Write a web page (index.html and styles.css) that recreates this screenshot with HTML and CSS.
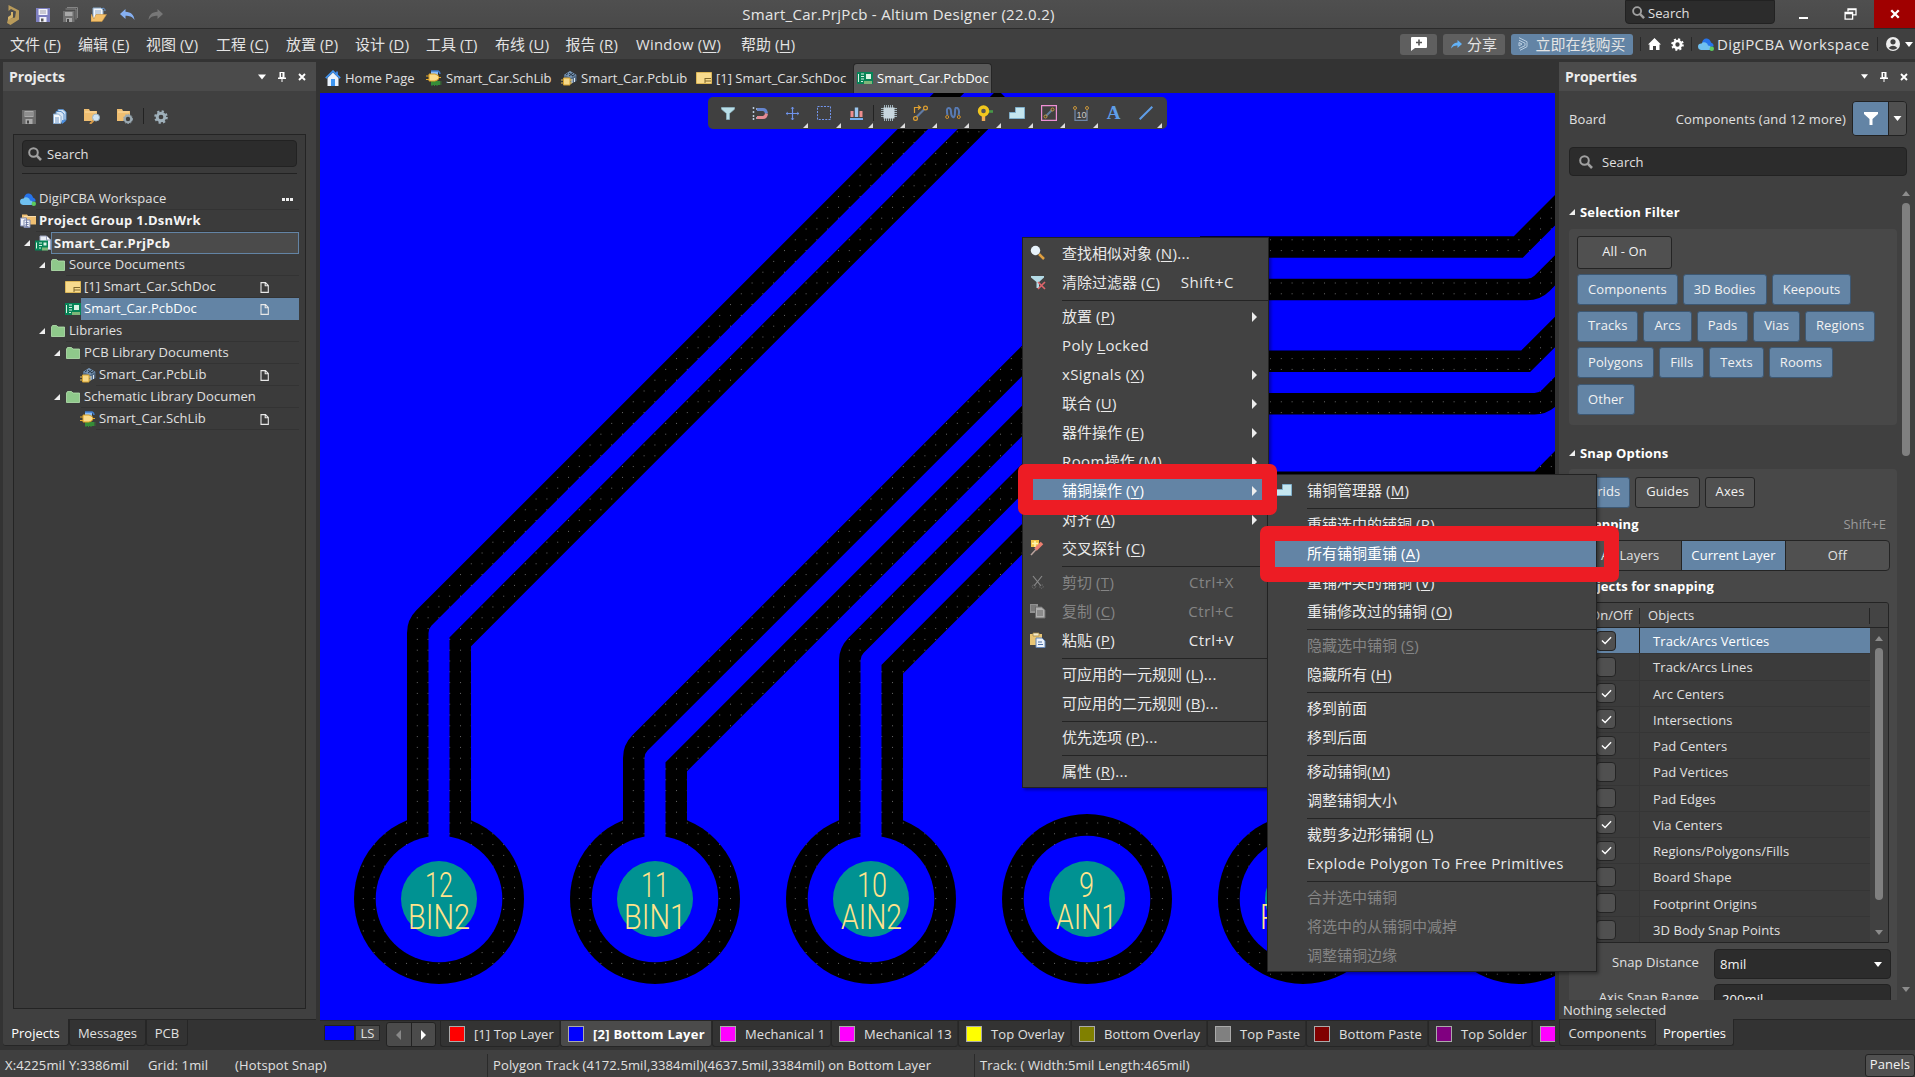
FILE: index.html
```html
<!DOCTYPE html>
<html lang="zh-CN">
<head>
<meta charset="utf-8">
<title>Smart_Car.PrjPcb - Altium Designer (22.0.2)</title>
<link rel="stylesheet" href="styles.css">
</head>
<body>
<svg class="defs" width="0" height="0">
  <symbol id="save" viewBox="0 0 14 14"><path d="M0 0h14v14H0z" fill="#7d7fc0"/><path d="M2.5 1h9v6h-9zM3.5 9h7v5h-7z" fill="#f2f2fa"/><path d="M4 3h6M4 5h6" stroke="#8a8a98" stroke-width=".8"/><path d="M5 10.500h2.500v3H5z" fill="#555"/></symbol>
  <symbol id="save-off" viewBox="0 0 14 14"><path d="M0 0h14v14H0z" fill="#6c6c6c"/><path d="M2.500 1h9v6h-9zM3.500 9h7v5h-7z" fill="#aaa"/><path d="M3 3h8M3 5h8" stroke="#666" stroke-width=".8"/><path d="M5 10.500h2v3H5z" fill="#444"/></symbol>
  <symbol id="saveall" viewBox="0 0 15 15"><path d="M4 .5h10.500V11M2.500 2h10.500v10.500" fill="none" stroke="#858585"/><path d="M0 4h11.500v11H0z" fill="#707070"/><path d="M2 5h7.500v4H2zM3 11h6v4H3z" fill="#a8a8a8"/><path d="M4 12h2v3H4z" fill="#444"/></symbol>
  <symbol id="open" viewBox="0 0 16 15"><path d="M2 1h8l2 2v9H2z" fill="#f4f7fb" stroke="#87a8c9"/><path d="M4 4h6M4 6h6M4 8h6" stroke="#7898b9" stroke-width=".8"/><path d="M0 7v7.500h11l4.500-7H5L3 12z" fill="#f3bf69" stroke="#c99544" stroke-width=".6"/><path d="M11 1.500q3-1 3 2.500" stroke="#6d9ddb" fill="none"/></symbol>
  <symbol id="undo" viewBox="0 0 15 12"><path d="M5.500 0v2.800C11 3 14 6 14.500 11 12 7.500 9.500 6.800 5.500 6.800V10L0 5z" fill="#86b0f2"/></symbol>
  <symbol id="redo" viewBox="0 0 15 12"><path d="M9.500 0v2.800C4 3 1 6 .5 11 3 7.500 5.500 6.800 9.500 6.800V10L15 5z" fill="#777"/></symbol>
  <symbol id="mag" viewBox="0 0 14 14"><circle cx="5.500" cy="5.500" r="4.300" fill="none" stroke="#a0a0a0" stroke-width="2"/><path d="M8.700 8.700l4.300 4.300" stroke="#a0a0a0" stroke-width="2.600"/></symbol>
  <symbol id="home" viewBox="0 0 16 16"><path d="M11 1.500h2V6h-2z" fill="#3a7ed8"/><path d="M2.500 8v8h11V8L8 2.500z" fill="#eaf2fb"/><path d="M.8 8.200L8 1.200l7.200 7" fill="none" stroke="#3f92ee" stroke-width="1.800"/><path d="M6 9h4v7H6z" fill="#3d96f2"/></symbol>
  <symbol id="schlib" viewBox="0 0 16 16"><path d="M5 1h7v4H5z" fill="#8cbcf5"/><path d="M5 1h7q2 1 2 3" fill="none" stroke="#3e7ccc" stroke-width="1.500"/><path d="M5 11h9v4H5z" fill="#368c38"/><path d="M6 15v1M8.500 15v1M11 15v1M14 12h1.500M14 14h1.500" stroke="#368c38"/><path d="M0 6h4M0 9.500h4M12 7.500h3" stroke="#e3a728"/><path d="M3 4h6q4 1 4 3.500T9 11H3z" fill="#fbdc8c" stroke="#d99e22"/></symbol>
  <symbol id="pcblib" viewBox="0 0 16 16"><path d="M3 5l6-4 6.500 4v6L10 14 3 9z" fill="#526b86"/><path d="M3 5l6-4 6.500 4L10 8z" fill="#7794b3"/><path d="M5 5l2-1.500M8 6l4-3M11 6l3-1.500M8 3l4 3" stroke="#283848"/><path d="M11 9v4M13.500 8v4" stroke="#dce5ef"/><path d="M2.500 8h6.500v7H2.500z" fill="#f7d987" stroke="#d6a330"/><path d="M0 10h2M0 13h2M9 10h2M9 13h2" stroke="#e8bd54"/></symbol>
  <symbol id="schdoc" viewBox="0 0 16 12"><path d="M.5.5h15v11H.5z" fill="#f8db8d" stroke="#ddb758"/><path d="M9 6.500h6M9 9h6M9 6v5" stroke="#80682c"/></symbol>
  <symbol id="pcbdoc" viewBox="0 0 16 12"><path d="M0 0h16v12H0z" fill="#078457"/><path d="M1.500 2v8M4 2h3M4 4.500h3M4 7h3M4 9.500h2" stroke="#d8f3e4"/><path d="M9 2h5v5H9z" fill="#d7f3e2"/><path d="M8 9v3M10 9v3M12 9v3M14 9v3" stroke="#f3e89b"/></symbol>
  <symbol id="prjpcb" viewBox="0 0 16 15"><path d="M5 .5h6.500l4 4V14H5z" fill="#e9edf5" stroke="#9ba2bd"/><path d="M11.500.5v4h4" fill="#fff" stroke="#9ba2bd"/><path d="M0 5h13v10H0z" fill="#078457"/><path d="M1.500 7v6M4 7.500h3M4 10h3M4 12.500h2" stroke="#d8f3e4"/><path d="M8.500 7h3v3h-3z" fill="#d7f3e2"/><path d="M8 12v3M10 12v3M12 12v3" stroke="#f3e89b"/></symbol>
  <symbol id="folder" viewBox="0 0 14 12"><path d="M.5 2l1-1.500h4L7 2h6.500v9.500H.5z" fill="#8fc98b" stroke="#b6e3b0" stroke-width=".8"/></symbol>
  <symbol id="group" viewBox="0 0 16 15"><path d="M2 1h5l1.500 2H16v8H2z" fill="#efbf72"/><path d="M4 3h12" stroke="#fadca9"/><path d="M.5 4.500h6v8h-6zM4 6.500h6V14H4z" fill="#eef1f8" stroke="#7e88ad"/><path d="M5.500 9h3M5.500 11h3M5.500 13h3" stroke="#5d6b9a" stroke-width=".8"/></symbol>
  <symbol id="cloud" viewBox="0 0 16 13"><path d="M4 5Q5 0 9 .5q3 .5 4 4 3 1 2.500 4L10 9z" fill="#2673ea"/><path d="M3 12Q0 11.500 0 8.500T3.500 5.500Q5 3.500 7.500 4.500T10 7.500q3 0 3 2.500T10.500 12z" fill="#6fc0f0"/><circle cx="13.800" cy="10.800" r="2.200" fill="#5ccb5f"/></symbol>
  <symbol id="doc" viewBox="0 0 9 11"><path d="M1 .6h4.500L8.300 3.500v6.900H1z M5.200.6v3.200h3" fill="none" stroke="#e8e8e8" stroke-width="1.100"/></symbol>
  <symbol id="tri" viewBox="0 0 6 6"><path d="M6 0v6H0z" fill="#eee"/></symbol>
  <symbol id="pin" viewBox="0 0 8 10"><path d="M1.500 0h5v5.500h-5zM0 5.500h8V7H0zM3.500 7h1v3h-1z" fill="#fff"/><path d="M3 1h1.500v4H3z" fill="#555"/></symbol>
  <symbol id="x" viewBox="0 0 8 8"><path d="M1 1l6 6M7 1L1 7" stroke="#fff" stroke-width="1.900"/></symbol>
  <symbol id="down" viewBox="0 0 8 5"><path d="M0 0h8L4 5z" fill="#fff"/></symbol>
  <symbol id="up" viewBox="0 0 8 5"><path d="M0 5h8L4 0z" fill="#8c8c8c"/></symbol>
  <symbol id="downg" viewBox="0 0 8 5"><path d="M0 0h8L4 5z" fill="#8c8c8c"/></symbol>
  <symbol id="gear" viewBox="0 0 14 14"><circle cx="7" cy="7" r="5.700" fill="none" stroke="currentColor" stroke-width="2.200" stroke-dasharray="2.200 2.270"/><circle cx="7" cy="7" r="3.800" fill="none" stroke="currentColor" stroke-width="2.900"/></symbol>
  <symbol id="copies" viewBox="0 0 14 15"><path d="M5 .5h5L13 3v8H5z" fill="#cfe0f2" stroke="#5b8fc8"/><path d="M3 2.500h5L11 5v8H3z" fill="#d8e6f5" stroke="#5b8fc8"/><path d="M.5 5h5L8 7.500v7H.5z" fill="#f5f9fd" stroke="#88abd0"/><path d="M2 9h4M2 11h4M2 13h4" stroke="#4a7db8" stroke-width=".8"/><path d="M9 11v4l4.500-3.500z" fill="#4b8fe0"/></symbol>
  <symbol id="fmag" viewBox="0 0 16 15"><path d="M0 0h5l1 2h7v10H0z" fill="#efbe71"/><path d="M1 3h11" stroke="#fbdca4"/><path d="M6 15l4-4" stroke="#d79a48" stroke-width="2"/><circle cx="12" cy="8.500" r="3.500" fill="#cfe3f2" stroke="#9bb5c7"/></symbol>
  <symbol id="fgear" viewBox="0 0 16 15"><path d="M0 0h5l1 2h7v10H0z" fill="#efbe71"/><path d="M1 3h11" stroke="#fbdca4"/><circle cx="11" cy="10" r="3.300" fill="#404040" stroke="#9aa9b2" stroke-width="2.200"/><circle cx="11" cy="10" r="4.600" fill="none" stroke="#9aa9b2" stroke-dasharray="1.500 1.500"/></symbol>
  <symbol id="funnel" viewBox="0 0 14 13"><path d="M0 0h14v2L8.500 7v6h-3V7L0 2z" fill="#fff"/></symbol>
  <symbol id="funnelb" viewBox="0 0 14 13"><path d="M.5.5h13v1.700L8.500 6.500v6h-3v-6L.5 2.200z" fill="#b9dfe8" stroke="#8fb8c6" stroke-width=".7"/></symbol>
  <symbol id="poly" viewBox="0 0 16 12"><path d="M.5 11.500v-6h6v-5h9v11z" fill="#c5e6ef" stroke="#80b0cc"/></symbol>
  <symbol id="check" viewBox="0 0 12 9"><path d="M1 4.500l3.500 3.300L11 1" fill="none" stroke="#fff" stroke-width="1.500"/></symbol>
</svg>

<div class="app">
  <header class="titlebar">
    <div class="quick">
      <svg class="q-logo" viewBox="0 0 13 20"><path d="M1.500 0L12 5.500v9L3.500 20 0 18l1-4 7-1.500 1-6L4 4l-2.500 2z" fill="#b89a5a"/><path d="M4 7v3L1 12v3l5-2.500V7z" fill="#d3b36b"/></svg>
      <svg class="q1"><use href="#save"/></svg><svg class="q2"><use href="#saveall"/></svg><svg class="q3"><use href="#open"/></svg><svg class="q4"><use href="#undo"/></svg><svg class="q5"><use href="#redo"/></svg>
    </div>
    <div class="title">Smart_Car.PrjPcb - Altium Designer (22.0.2)</div>
    <div class="winctl">
      <div class="tsearch"><svg width="13" height="13"><use href="#mag"/></svg><span>Search</span></div>
      <i class="min"></i>
      <svg class="restore" viewBox="0 0 12 12"><path d="M3.500 3.500V.8h8v6H8M3 1.500h9" fill="none" stroke="#fff" stroke-width="1.300"/><path d="M.6 4.500h7.500v6.700H.6zM.5 5.500h8" fill="none" stroke="#fff" stroke-width="1.300"/></svg>
      <div class="close"><svg width="10" height="10"><use href="#x"/></svg></div>
    </div>
  </header>

  <nav class="menubar">
    <div class="menus">
      <span>文件 <b>(<u>F</u>)</b></span><span>编辑 <b>(<u>E</u>)</b></span><span>视图 <b>(<u>V</u>)</b></span><span>工程 <b>(<u>C</u>)</b></span><span>放置 <b>(<u>P</u>)</b></span><span>设计 <b>(<u>D</u>)</b></span><span>工具 <b>(<u>T</u>)</b></span><span>布线 <b>(<u>U</u>)</b></span><span>报告 <b>(<u>R</u>)</b></span><span><b>Window (<u>W</u>)</b></span><span>帮助 <b>(<u>H</u>)</b></span>
    </div>
    <div class="account">
      <div class="abtn a1"><svg width="16" height="14" viewBox="0 0 16 14"><path d="M0 1q0-1 1-1h14q1 0 1 1v9q0 1-1 1H4l-4 3z" fill="#fff"/><path d="M8 2.500v6M5 5.500h6" stroke="#555" stroke-width="1.600"/></svg></div>
      <div class="abtn a2"><svg width="11" height="9" viewBox="0 0 11 9"><path d="M6.500 0L11 4 6.500 8V5.500Q2.500 5 0 8.500 1 3 6.500 2.500z" fill="#62b1f6"/></svg><span>分享</span></div>
      <div class="abtn a3"><svg width="10" height="14" viewBox="0 0 10 14"><path d="M1 .7l8 4v5L2 13.300M1 3.200l6 3v2.500L1 11.500M1 5.500l3 1.500-3 2z" fill="none" stroke="#bcd0e2"/></svg><span>立即在线购买</span></div>
      <i class="vs"></i>
      <svg class="ah" viewBox="0 0 13 12"><path d="M6.500 0L13 6.500h-1.500V12H8V8H5v4H1.500V6.500H0z" fill="#fff"/></svg>
      <svg class="ag" viewBox="0 0 14 14"><use href="#gear"/></svg>
      <i class="vs"></i>
      <svg class="ac"><use href="#cloud"/></svg><span class="ws">DigiPCBA Workspace</span>
      <i class="vs"></i>
      <svg class="au" viewBox="0 0 14 14"><circle cx="7" cy="7" r="7" fill="#eee"/><circle cx="7" cy="4.800" r="2.600" fill="#404040"/><path d="M2.500 11Q7 6.500 11.500 11 7 14.500 2.500 11z" fill="#404040"/></svg>
      <svg class="ad" width="8" height="5"><use href="#down"/></svg>
    </div>
  </nav>

  <main class="work">
    <aside class="left">
      <div class="panel">
        <div class="phead"><h2>Projects</h2><div class="pctl"><svg width="8" height="6"><use href="#down"/></svg><svg width="8" height="10"><use href="#pin"/></svg><svg width="8" height="8"><use href="#x"/></svg></div></div>
        <div class="ptools"><svg width="14" height="14"><use href="#save-off"/></svg><svg width="14" height="15"><use href="#copies"/></svg><svg width="16" height="15"><use href="#fmag"/></svg><svg width="16" height="15"><use href="#fgear"/></svg><i></i><svg class="pg" width="14" height="14"><use href="#gear"/></svg></div>
        <div class="tree">
          <div class="tsearchbox"><svg width="14" height="14"><use href="#mag"/></svg>Search</div>
          <div class="rule"></div>
          <ul>
            <li class="l0 cl"><svg class="ic" viewBox="0 0 16 13"><use href="#cloud"/></svg><span>DigiPCBA Workspace</span><em><i></i><i></i><i></i></em></li>
            <li class="l0 bold"><svg class="ic"><use href="#group"/></svg><span>Project Group 1.DsnWrk</span></li>
            <li class="l1 bold box"><svg class="ar"><use href="#tri"/></svg><svg class="ic"><use href="#prjpcb"/></svg><span>Smart_Car.PrjPcb</span></li>
            <li class="l2"><svg class="ar"><use href="#tri"/></svg><svg class="fo"><use href="#folder"/></svg><span>Source Documents</span></li>
            <li class="l3"><svg class="dc"><use href="#schdoc"/></svg><span>[1] Smart_Car.SchDoc</span><svg class="pg2"><use href="#doc"/></svg></li>
            <li class="l3 sel"><svg class="dc"><use href="#pcbdoc"/></svg><span>Smart_Car.PcbDoc</span><svg class="pg2"><use href="#doc"/></svg></li>
            <li class="l2"><svg class="ar"><use href="#tri"/></svg><svg class="fo"><use href="#folder"/></svg><span>Libraries</span></li>
            <li class="l2b"><svg class="ar"><use href="#tri"/></svg><svg class="fo"><use href="#folder"/></svg><span>PCB Library Documents</span></li>
            <li class="l4"><svg class="ic"><use href="#pcblib"/></svg><span>Smart_Car.PcbLib</span><svg class="pg2"><use href="#doc"/></svg></li>
            <li class="l2b"><svg class="ar"><use href="#tri"/></svg><svg class="fo"><use href="#folder"/></svg><span>Schematic Library Documen</span></li>
            <li class="l4"><svg class="ic"><use href="#schlib"/></svg><span>Smart_Car.SchLib</span><svg class="pg2"><use href="#doc"/></svg></li>
          </ul>
        </div>
      </div>
      <div class="ptabs"><span class="on">Projects</span><span>Messages</span><span>PCB</span></div>
    </aside>

    <section class="center">
      <div class="dtabs">
        <span><svg class="ic"><use href="#home"/></svg>Home Page</span><span><svg class="ic"><use href="#schlib"/></svg>Smart_Car.SchLib</span><span><svg class="ic"><use href="#pcblib"/></svg>Smart_Car.PcbLib</span><span><svg class="dc"><use href="#schdoc"/></svg>[1] Smart_Car.SchDoc</span><span class="on"><svg class="dc"><use href="#pcbdoc"/></svg>Smart_Car.PcbDoc</span>
      </div>
      <svg class="board" viewBox="320 93 1235 927">
        <defs>
          <pattern id="grid" patternUnits="userSpaceOnUse" x="6.400" y="1.700" width="10.800" height="10.800"><path d="M0 0h10.800v10.800H0z" fill="#000"/><path d="M0 0h1v1H0z" fill="#6a6a6a"/></pattern>
          <g id="tracks" fill="none" stroke-linejoin="round">
            <path d="M439 899V633L990 82"/><path d="M655 899V758L1100 313"/><path d="M871 899V660.500L1150 381"/>
            <path d="M1200 268.300H1527L1600 195.300"/><path d="M1200 382.500H1534.500L1600 317"/><path d="M1200 503.500H1548L1600 451"/>
          </g>
          <g id="pads"><circle cx="439" cy="899"/><circle cx="655" cy="899"/><circle cx="871" cy="899"/><circle cx="1087" cy="899"/><circle cx="1303" cy="899"/><circle cx="1519" cy="899"/></g>
        </defs>
        <path d="M320 93h1235v927H320z" fill="#00f"/>
        <use href="#tracks" stroke="url(#grid)" stroke-width="64"/>
        <use href="#pads" class="p-out" fill="url(#grid)"/>
        <use href="#tracks" stroke="#00f" stroke-width="21"/>
        <use href="#pads" class="p-in" fill="#00f"/>
        <use href="#pads" class="p-hole" fill="#009292"/>
        <g class="net">
          <text x="425" y="897" textLength="28" lengthAdjust="spacingAndGlyphs">12</text><text x="408" y="929" textLength="62" lengthAdjust="spacingAndGlyphs">BIN2</text>
          <text x="641" y="897" textLength="28" lengthAdjust="spacingAndGlyphs">11</text><text x="624" y="929" textLength="62" lengthAdjust="spacingAndGlyphs">BIN1</text>
          <text x="857" y="897" textLength="30" lengthAdjust="spacingAndGlyphs">10</text><text x="841" y="929" textLength="61" lengthAdjust="spacingAndGlyphs">AIN2</text>
          <text x="1079" y="897" textLength="15" lengthAdjust="spacingAndGlyphs">9</text><text x="1056" y="929" textLength="61" lengthAdjust="spacingAndGlyphs">AIN1</text>
          <text x="1260" y="929" textLength="86" lengthAdjust="spacingAndGlyphs">PWMA</text>
        </g>
      </svg>
      <div class="ltabs">
        <div class="ls"><i></i><b>LS</b></div>
        <div class="lnav"><span><svg width="5" height="10" viewBox="0 0 5 10"><path d="M5 0v10L0 5z" fill="#888"/></svg></span><span><svg width="5" height="10" viewBox="0 0 5 10"><path d="M0 0v10l5-5z" fill="#fff"/></svg></span></div>
        <div class="lt red">[1] Top Layer</div><div class="lt blue on">[2] Bottom Layer</div><div class="lt mag">Mechanical 1</div><div class="lt mag">Mechanical 13</div><div class="lt yel">Top Overlay</div><div class="lt oli">Bottom Overlay</div><div class="lt gry">Top Paste</div><div class="lt mar">Bottom Paste</div><div class="lt pur">Top Solder</div><div class="lt mag"></div>
      </div>
    </section>

    <aside class="right">
      <div class="panel">
        <div class="phead"><h2>Properties</h2><div class="pctl"><svg width="7" height="5"><use href="#down"/></svg><svg width="8" height="10"><use href="#pin"/></svg><svg width="8" height="8"><use href="#x"/></svg></div></div>
        <div class="kind"><span>Board</span><span class="k2">Components (and 12 more)</span><div class="fbtn"><i><svg width="14" height="13"><use href="#funnel"/></svg></i><b><svg width="9" height="5"><use href="#down"/></svg></b></div></div>
        <div class="psearch"><svg width="14" height="14"><use href="#mag"/></svg>Search</div>
        <div class="scroller">
          <div class="sections">
            <h3 class="h-sel"><svg width="6" height="6"><use href="#tri"/></svg>Selection Filter</h3>
            <div class="card filt">
              <div><button class="g">All - On</button></div>
              <div><button>Components</button><button>3D Bodies</button><button>Keepouts</button></div>
              <div><button>Tracks</button><button>Arcs</button><button>Pads</button><button>Vias</button><button>Regions</button></div>
              <div><button>Polygons</button><button>Fills</button><button>Texts</button><button>Rooms</button></div>
              <div><button>Other</button></div>
            </div>
            <h3 class="h-snap"><svg width="6" height="6"><use href="#tri"/></svg>Snap Options</h3>
            <div class="card snap">
              <div class="modes"><button>Grids</button><button class="g">Guides</button><button class="g">Axes</button></div>
              <div class="srow"><strong>Snapping</strong><span>Shift+E</span></div>
              <div class="seg"><span>All Layers</span><span class="on">Current Layer</span><span>Off</span></div>
              <strong class="ofs">Objects for snapping</strong>
              <div class="tbl">
                <div class="th"><span>On/Off</span><span>Objects</span></div>
                <div class="tb">
                  <div class="rows">
                    <div class="r on"><i><svg><use href="#check"/></svg></i><span>Track/Arcs Vertices</span></div>
                    <div class="r"><i></i><span>Track/Arcs Lines</span></div>
                    <div class="r"><i><svg><use href="#check"/></svg></i><span>Arc Centers</span></div>
                    <div class="r"><i><svg><use href="#check"/></svg></i><span>Intersections</span></div>
                    <div class="r"><i><svg><use href="#check"/></svg></i><span>Pad Centers</span></div>
                    <div class="r"><i></i><span>Pad Vertices</span></div>
                    <div class="r"><i></i><span>Pad Edges</span></div>
                    <div class="r"><i><svg><use href="#check"/></svg></i><span>Via Centers</span></div>
                    <div class="r"><i><svg><use href="#check"/></svg></i><span>Regions/Polygons/Fills</span></div>
                    <div class="r"><i></i><span>Board Shape</span></div>
                    <div class="r"><i></i><span>Footprint Origins</span></div>
                    <div class="r"><i></i><span>3D Body Snap Points</span></div>
                  </div>
                  <div class="sb"><svg width="8" height="5"><use href="#up"/></svg><i></i><svg width="8" height="5"><use href="#downg"/></svg></div>
                </div>
              </div>
              <div class="fld"><label>Snap Distance</label><div>8mil<svg width="10" height="5"><use href="#down"/></svg></div></div>
              <div class="fld f2"><label>Axis Snap Range</label><div>200mil</div></div>
            </div>
          </div>
          <div class="sb big"><svg width="8" height="5"><use href="#up"/></svg><i></i><svg width="8" height="5"><use href="#downg"/></svg></div>
        </div>
        <div class="nosel">Nothing selected</div>
      </div>
      <div class="ptabs"><span>Components</span><span class="on">Properties</span></div>
    </aside>
  </main>

  <footer class="status">
    <span>X:4225mil Y:3386mil</span><span>Grid: 1mil</span><span>(Hotspot Snap)</span><span>Polygon Track (4172.5mil,3384mil)(4637.5mil,3384mil) on Bottom Layer</span><span>Track: ( Width:5mil Length:465mil)</span><button>Panels</button>
  </footer>
</div>

<div class="cbar">
  <span><svg width="14" height="13"><use href="#funnelb"/></svg></span>
  <span><svg width="16" height="13" viewBox="0 0 16 13"><path d="M1.500 0v2M1.500 4v2M1.500 8v2M1.500 11v2M4 2h1M4 11h1" stroke="#bcd" stroke-width="1.500"/><path d="M5 2.500h6q3 0 3.500 4" fill="none" stroke="#6585cf" stroke-width="3"/><path d="M5 10.500h6q3 0 3.500-4" fill="none" stroke="#e58a93" stroke-width="3"/></svg></span>
  <span class="c"><svg width="13" height="13" viewBox="0 0 13 13"><path d="M6.500 0v13M0 6.500h13" stroke="#6f93ea" stroke-width="1.200"/><path d="M5 2l1.500-2L8 2M5 11l1.500 2L8 11M2 5L0 6.500 2 8M11 5l2 1.500L11 8" fill="none" stroke="#6f93ea" stroke-width=".7"/></svg></span>
  <span class="c"><svg width="14" height="14" viewBox="0 0 14 14"><path d="M.5.500h13v13H.5z" fill="none" stroke="#7396ee" stroke-dasharray="2 1.250"/></svg></span>
  <span class="c"><svg width="13" height="13" viewBox="0 0 13 13"><path d="M.5 4h3v6h-3zM9.500 4h3v6h-3z" fill="#ee8e8e"/><path d="M4.800.5h3.400V10H4.800z" fill="#9cc6ee"/><path d="M0 12h13" stroke="#75aef0" stroke-width="2"/></svg></span>
  <i></i>
  <span class="c"><svg width="16" height="16" viewBox="0 0 16 16"><path d="M3.500 0v16M5.500 0v16M7.500 0v16M9.500 0v16M11.500 0v16M0 3.500h16M0 5.500h16M0 7.500h16M0 9.500h16M0 11.500h16" stroke="#9fb1ba"/><path d="M2.500 2.500h11v11h-11z" fill="#c8d6de"/></svg></span>
  <span class="c"><svg width="15" height="16" viewBox="0 0 15 16"><path d="M3.500 12L11 4.500" stroke="#607ba5" stroke-width="2.200"/><circle cx="2.500" cy="13.500" r="1.900" fill="none" stroke="#e0a030" stroke-width="1.200"/><circle cx="12.500" cy="3" r="1.900" fill="none" stroke="#e0a030" stroke-width="1.200"/><path d="M1.500 8V2.500H7M5 .5l2.500 2L5 4.500" fill="none" stroke="#e0a030" stroke-width="1.200"/></svg></span>
  <span class="c"><svg width="16" height="12" viewBox="0 0 16 12"><path d="M2.500 8Q1 1 3.500 1T6 5t2 5 2-5 2.500-4T13.500 8" fill="none" stroke="#587bb4" stroke-width="2"/><circle cx="2.200" cy="10" r="1.500" fill="none" stroke="#d0922c"/><circle cx="13.800" cy="10" r="1.500" fill="none" stroke="#d0922c"/></svg></span>
  <span class="c"><svg width="16" height="16" viewBox="0 0 16 16"><path d="M9 6.500h7" stroke="#479848" stroke-width="2.600"/><path d="M6.500 9v7" stroke="#f0ad55" stroke-width="3.400"/><circle cx="6.500" cy="6" r="4" fill="#555" stroke="#f2c71d" stroke-width="3.400"/></svg></span>
  <span class="c"><svg width="16" height="12"><use href="#poly"/></svg></span>
  <span class="c"><svg width="16" height="16" viewBox="0 0 16 16"><path d="M.6.600h14.800v14.800H.6z" fill="none" stroke="#ee8fd4" stroke-width="1.200"/><path d="M5 11l6-6" stroke="#6480a0" stroke-width="2"/><circle cx="4.500" cy="11.500" r="1.500" fill="none" stroke="#c8963c"/><circle cx="11.500" cy="4.500" r="1.500" fill="none" stroke="#c8963c"/></svg></span>
  <span class="c"><svg width="16" height="15" viewBox="0 0 16 15"><path d="M2 4v10.300h12V4" fill="none" stroke="#6d86a8" stroke-width="1.300"/><circle cx="2" cy="2" r="1.500" fill="none" stroke="#c8963c"/><circle cx="14" cy="2" r="1.500" fill="none" stroke="#c8963c"/><text x="3.500" y="11.500" font-size="9">10</text></svg></span>
  <span class="A">A</span>
  <span class="c"><svg width="14" height="14" viewBox="0 0 14 14"><path d="M.7 13.300L13.300.7" stroke="#5f9ee8" stroke-width="2"/></svg></span>
</div>

<div class="menu m1">
  <div class="mi"><svg class="mic" viewBox="0 0 16 16"><path d="M9 9l5 5" stroke="#e0a040" stroke-width="2.500"/><circle cx="5.500" cy="5.500" r="4.700" fill="#e8f3fb"/></svg>查找相似对象 <b>(<u>N</u>)...</b></div>
  <div class="mi"><svg class="mic" viewBox="0 0 16 16"><path d="M1 2h13v1.500L9 8v6H6.500V8L1 3.500z" fill="#b4dbe6"/><path d="M8 8l7 7M15 8l-7 7" stroke="#e0666c" stroke-width="1.600"/></svg>清除过滤器 <b>(<u>C</u>)</b><kbd>Shift+C</kbd></div>
  <hr>
  <div class="mi s">放置 <b>(<u>P</u>)</b></div>
  <div class="mi"><b>Poly <u>L</u>ocked</b></div>
  <div class="mi s"><b>xSignals (<u>X</u>)</b></div>
  <div class="mi s">联合 <b>(<u>U</u>)</b></div>
  <div class="mi s">器件操作 <b>(<u>E</u>)</b></div>
  <div class="mi s"><b>Room</b>操作 <b>(<u>M</u>)</b></div>
  <div class="mi s hot">铺铜操作 <b>(<u>Y</u>)</b></div>
  <div class="mi s">对齐 <b>(<u>A</u>)</b></div>
  <div class="mi"><svg class="mic" viewBox="0 0 16 16"><path d="M1 0h8v7H1z" fill="#f3c64a"/><path d="M2 3.500h6M5 1v6" stroke="#fff5b0" stroke-width="1.500"/><path d="M5.500 9.500L12 3" stroke="#ec7f70" stroke-width="3.600"/><path d="M1 15l5-5.500" stroke="#b9a29c" stroke-width="1.500"/></svg>交叉探针 <b>(<u>C</u>)</b></div>
  <hr>
  <div class="mi off"><svg class="mic" viewBox="0 0 16 16"><path d="M3 2l8 10M12 2L4 12" stroke="#8a8a8a" stroke-width="1.200"/><circle cx="4" cy="12.500" r="1.800" fill="none" stroke="#777" stroke-dasharray="1 1"/><circle cx="11.500" cy="12.500" r="1.800" fill="none" stroke="#777" stroke-dasharray="1 1"/></svg>剪切 <b>(<u>T</u>)</b><kbd>Ctrl+X</kbd></div>
  <div class="mi off"><svg class="mic" viewBox="0 0 16 16"><path d="M0 1h8v9H0z" fill="#909090"/><path d="M5.500 4h6l3.500 3v8H5.500z" fill="#b0b0b0" stroke="#6c6c6c"/><path d="M1 3h5M1 5h4M1 7h4M7 8h6M7 10h6M7 12h6" stroke="#666"/></svg>复制 <b>(<u>C</u>)</b><kbd>Ctrl+C</kbd></div>
  <div class="mi"><svg class="mic" viewBox="0 0 16 16"><path d="M0 2h12v11H0z" fill="#e9c574"/><path d="M3 1h6v3H3z" fill="#f6edcf" stroke="#a78b48" stroke-width=".8"/><path d="M6 6h6l3 3v6.500H6z" fill="#eaf1fa" stroke="#6385b5"/><path d="M8 10h4M8 12.500h5" stroke="#4c6fa5"/></svg>粘贴 <b>(<u>P</u>)</b><kbd>Ctrl+V</kbd></div>
  <hr>
  <div class="mi">可应用的一元规则 <b>(<u>L</u>)...</b></div>
  <div class="mi">可应用的二元规则 <b>(<u>B</u>)...</b></div>
  <hr>
  <div class="mi">优先选项 <b>(<u>P</u>)...</b></div>
  <hr>
  <div class="mi">属性 <b>(<u>R</u>)...</b></div>
</div>

<div class="menu m2">
  <div class="mi"><svg class="mic" viewBox="0 0 16 12"><use href="#poly"/></svg>铺铜管理器 <b>(<u>M</u>)</b></div>
  <hr>
  <div class="mi">重铺选中的铺铜 <b>(<u>R</u>)</b></div>
  <div class="mi hot">所有铺铜重铺 <b>(<u>A</u>)</b></div>
  <div class="mi">重铺冲突的铺铜 <b>(<u>V</u>)</b></div>
  <div class="mi">重铺修改过的铺铜 <b>(<u>O</u>)</b></div>
  <hr>
  <div class="mi off">隐藏选中铺铜 <b>(<u>S</u>)</b></div>
  <div class="mi">隐藏所有 <b>(<u>H</u>)</b></div>
  <hr>
  <div class="mi">移到前面</div>
  <div class="mi">移到后面</div>
  <hr>
  <div class="mi">移动铺铜<b>(<u>M</u>)</b></div>
  <div class="mi">调整铺铜大小</div>
  <hr>
  <div class="mi">裁剪多边形铺铜 <b>(<u>L</u>)</b></div>
  <div class="mi"><b>Explode Polygon To Free Primitives</b></div>
  <hr>
  <div class="mi off">合并选中铺铜</div>
  <div class="mi off">将选中的从铺铜中减掉</div>
  <div class="mi off">调整铺铜边缘</div>
</div>
<div class="mark k1"></div>
<div class="mark k2m"></div>
</body>
</html>
```
FILE: styles.css
```css
* { box-sizing: border-box; }
body { margin: 0; width: 1915px; height: 1077px; overflow: hidden; background: #333; color: #e0e0e0; font: 13px/16px "Open Sans", "Noto Sans", "Noto Sans CJK SC", sans-serif; letter-spacing: .08px; }
svg { display: block; flex: none; }
.defs { position: absolute; }
h2, h3, ul { margin: 0; padding: 0; list-style: none; }
.app { display: flex; flex-direction: column; width: 1915px; height: 1077px; }

.titlebar { display: grid; grid-template-columns: 700px 397px 818px; height: 29px; background: linear-gradient(#4f4f4f, #494949); border-bottom: 1px solid #2b2b2b; }
.quick { display: flex; align-items: center; padding-left: 7px; }
.quick .q-logo { width: 13px; height: 20px; margin-right: 16px; }
.q1 { width: 14px; height: 14px; margin-right: 13px; }
.q2 { width: 15px; height: 15px; margin-right: 13px; }
.q3 { width: 16px; height: 15px; margin-right: 13px; }
.q4 { width: 15px; height: 12px; margin-right: 13px; }
.q5 { width: 15px; height: 12px; }
.title { text-align: center; font-size: 15px; letter-spacing: .3px; line-height: 29px; white-space: nowrap; color: #e6e6e6; }
.winctl { display: flex; justify-content: flex-end; }
.tsearch { display: flex; align-items: flex-start; width: 150px; height: 24px; background: #2c2c2c; border: 1px solid #222; border-radius: 0 0 4px 4px; padding: 5px 0 0 6px; margin-right: 24px; gap: 3px; }
.tsearch span { line-height: 14px; }
.min { width: 9px; height: 2px; background: #fff; margin: 17px 36px 0 0; }
.restore { width: 13px; height: 12px; margin: 8px 17px 0 0; }
.close { width: 41px; height: 28px; background: #a00000; display: grid; place-items: center; }

.menubar { display: flex; justify-content: space-between; height: 30px; background: #404040; font-size: 15px; line-height: 31px; color: #e4e4e4; letter-spacing: 0; }
.menus { display: flex; padding-left: 10px; }
.menus span { width: 68px; white-space: nowrap; }
.menus span:nth-child(3), .menus span:nth-child(4) { width: 70px; }
.menus span:nth-child(5) { width: 69px; }
.menus span:nth-child(6) { width: 71px; }
.menus span:nth-child(7) { width: 69px; }
.menus span:nth-child(8), .menus span:nth-child(9) { width: 70.500px; }
.menus span:nth-child(10) { width: 105px; }
.menus b, .menu b { font-weight: 400; font-size: 15px; letter-spacing: .38px; }
.menus b { font-size: 14.800px; letter-spacing: .3px; }
.menus u, .menu u { text-underline-offset: 2px; text-decoration-thickness: 1px; }
.account { display: flex; align-items: center; width: 515px; }
.abtn { height: 21px; border-radius: 3px; background: #5f5f5f; display: flex; align-items: center; justify-content: center; line-height: 21px; gap: 5px; }
.a1 { width: 37px; margin-right: 6px; }
.a2 { width: 62px; margin-right: 6px; }
.a3 { width: 122px; background: #6384a5; gap: 7px; margin-right: 7px; }
.vs { width: 1px; height: 14px; background: #292929; }
.ah { width: 13px; height: 12px; margin: 0 10px 0 7px; }
.ag { width: 13px; height: 13px; margin-right: 7px; color: #fff; }
.ac { width: 16px; height: 13px; margin: 0 3px 0 6px; }
.ws { width: 154px; margin-right: 6px; font-size: 15px; letter-spacing: .4px; white-space: nowrap; }
.au { width: 14px; height: 14px; margin: 0 5px 0 8px; }

.work { display: flex; height: 991px; padding-top: 3px; background: #333; }
.left { width: 320px; padding-left: 3px; }
.left .panel { width: 313px; }
.panel { height: 957px; background: #404040; display: flex; flex-direction: column; }
.phead { height: 29px; flex: none; background: #4b4b4b; display: flex; justify-content: space-between; align-items: center; padding: 0 10px 0 6px; }
.phead h2 { font-size: 14px; font-weight: 700; letter-spacing: -.1px; color: #ececec; }
.pctl { display: flex; align-items: center; gap: 12px; }
.ptools { display: flex; align-items: flex-end; height: 43px; padding-left: 19px; flex: none; }
.ptools > * { margin-bottom: 10px; }
.ptools svg { margin-right: 17px; }
.ptools svg:nth-child(4) { margin-right: 10px; }
.ptools i { width: 1px; height: 16px; background: #222; margin-right: 10px; }
.pg { color: #9fb0ba; }
.tree { height: 875px; width: 293px; margin: 0 0 0 10px; border: 1px solid #242424; padding: 5px 8px 0 8px; background: #3b3b3b; }
.tsearchbox, .psearch { display: flex; align-items: center; background: #2c2c2c; border: 1px solid #222; border-radius: 4px; }
.tsearchbox { height: 27px; padding-left: 5px; gap: 5px; }
.rule { height: 1px; background: #222; margin: 6px 0 14px; }
.tree ul { margin: 0 -2px 0 -2px; }
.tree li { display: flex; align-items: center; height: 22px; white-space: nowrap; position: relative; }
.tree li span { flex: 1; height: 22px; line-height: 21px; border-bottom: 1px solid #333; padding-left: 3px; }
.ic { width: 16px; height: 16px; }
.cl .ic { height: 13px; }
.dc { width: 16px; height: 12px; }
.fo { width: 14px; height: 12px; margin-right: 1px; }
.ar { width: 6px; height: 6px; }
.bold { font-weight: 700; color: #f4f4f4; letter-spacing: .3px; }
.l1 { padding-left: 4px; } .l1 .ar { margin-right: 5px; }
.l2 { padding-left: 19px; } .l2 .ar { margin-right: 6px; }
.l2b { padding-left: 34px; } .l2b .ar { margin-right: 6px; }
.l3 { padding-left: 45px; }
.l4 { padding-left: 60px; }
.tree .box span { border: 1px solid #6384a5; background: #4b4b4b; line-height: 20px; padding-left: 2px; }
.tree .sel span { background: #6384a5; border-color: #6384a5; color: #fff; }
.pg2 { width: 9px; height: 11px; position: absolute; right: 30px; top: 6px; }
.tree em { display: flex; gap: 1px; position: absolute; right: 6px; top: 10px; }
.tree em i { width: 3px; height: 3px; background: #eee; }

.ptabs { display: flex; height: 27px; border-top: 1px solid #262626; line-height: 27px; letter-spacing: 0; }
.ptabs span { text-align: center; border: 1px solid #262626; border-top: 0; border-radius: 0 0 3px 3px; height: 26px; }
.ptabs .on { background: #404040; color: #fff; border-left: 0; margin-top: -1px; height: 27px; line-height: 29px; }
.left .ptabs { width: 313px; }
.left .ptabs span:nth-child(1) { width: 66px; }
.left .ptabs span:nth-child(2) { width: 77px; }
.left .ptabs span:nth-child(3) { width: 42px; }
.right .ptabs span:nth-child(1) { width: 97px; }
.right .ptabs span:nth-child(2) { width: 78px; }

.center { width: 1235px; }
.dtabs { display: flex; height: 31px; padding: 1px 0 0 5px; letter-spacing: 0; }
.dtabs span { display: flex; align-items: center; gap: 4px; width: 135px; height: 29px; white-space: nowrap; }
.dtabs span:nth-child(1) { width: 101px; }
.dtabs span:nth-child(4) { width: 157px; }
.dtabs .on { width: 139px; height: 30px; padding: 0 0 2px 3px; background: #595959; border: 1px solid #262626; border-bottom: 0; border-radius: 4px 4px 0 0; color: #fff; }
.board { width: 1235px; height: 927px; }
.p-out { --r: 85px; }
.p-in { --r: 63.300px; }
.p-hole { --r: 38px; }
#pads circle { r: var(--r); }
.net { font: 300 35px Roboto, "Liberation Sans", sans-serif; fill: #ffe38c; letter-spacing: 0; }
.ltabs { display: flex; height: 27px; overflow: hidden; border-top: 1px solid #262626; padding-left: 4px; }
.ls { display: flex; flex: none; width: 62px; height: 16px; margin-top: 4px; }
.ls i { width: 31px; background: #00f; border: 1px solid #222; }
.ls b { width: 25px; background: #4b4b4b; border: 1px solid #262626; font-weight: 400; text-align: center; line-height: 15px; }
.lnav { display: flex; flex: none; width: 50px; margin: 1px 4px 0 0; background: #4b4b4b; border: 1px solid #222; border-radius: 3px; height: 25px; }
.lnav span { flex: 1; display: grid; place-items: center; }
.lnav span + span { border-left: 1px solid #222; }
.lt { display: flex; align-items: center; flex: none; white-space: nowrap; border: 1px solid #262626; border-top: 0; border-right-color: #2a2a2a; border-radius: 0 0 3px 3px; padding-left: 7px; width: 120px; height: 26px; }
.lt::before { content: ""; width: 14px; height: 14px; border: 1px solid #aaa; margin-right: 9px; background: var(--c); flex: none; }
.lt:nth-child(3) { padding-left: 8px; }
.lt.on { background: #4b4b4b; font-weight: 700; color: #fff; letter-spacing: .25px; width: 152px; }
.lt:nth-child(5) { width: 119px; } .lt:nth-child(6) { width: 127px; } .lt:nth-child(7) { width: 113px; } .lt:nth-child(8) { width: 136px; } .lt:nth-child(9) { width: 99px; } .lt:nth-child(10) { width: 122px; } .lt:nth-child(11) { width: 104px; }
.red { --c: #f00; } .blue { --c: #00f; } .mag { --c: #f0f; } .yel { --c: #ff0; } .oli { --c: #808000; } .gry { --c: #808080; } .mar { --c: #800000; } .pur { --c: #800080; }

.right { width: 360px; padding-left: 4px; }
.right .phead { padding: 0 7px 0 6px; }
.right .panel { overflow: hidden; }
.kind { display: flex; align-items: center; height: 54px; padding: 0 8px 0 10px; flex: none; }
.kind > span { margin-top: 1px; }
.kind .k2 { margin-left: auto; margin-right: 6px; letter-spacing: .17px; }
.fbtn { display: flex; width: 55px; height: 35px; border: 1px solid #222; border-radius: 4px; overflow: hidden; }
.fbtn i { width: 36px; background: #6384a5; display: grid; place-items: center; border-right: 1px solid #222; }
.fbtn b { flex: 1; background: #505050; display: grid; place-items: center; }
.psearch { height: 29px; margin: 2px 8px 0 10px; padding-left: 9px; gap: 9px; flex: none; }
.scroller { display: flex; height: 824px; overflow: hidden; padding-left: 10px; }
.sections { width: 328px; }
h3 { display: flex; align-items: center; gap: 5px; font-size: 13px; color: #fff; height: 18px; letter-spacing: .17px; }
.h-sel { margin: 27px 0 8px; }
.h-snap { margin: 19px 0 7px; }
.card { background: #484848; border-radius: 4px; }
.filt { height: 196px; padding: 7px 0 0 8px; }
.filt div { display: flex; gap: 5px; height: 36.700px; }
button { font: inherit; color: #f2f2f2; background: #6384a5; border: 1px solid #3d5873; border-radius: 3px; height: 31px; padding: 0 10px 2px; margin: 0; white-space: nowrap; letter-spacing: .08px; }
.g { background: #505050; border-color: #242424; }
.filt .g { width: 95px; height: 33px; padding-bottom: 4px; }
.filt div:first-child { height: 38px; }
.snap { height: 560px; padding: 8px 7px 0 9px; }
.modes { display: flex; gap: 5px; }
.modes button { width: 52px; height: 31px; padding: 0 0 3px; }
.modes .g { width: 65px; }
.modes .g + .g { width: 50px; }
.srow { display: flex; justify-content: space-between; margin-top: 8px; padding-right: 4px; height: 24px; color: #fff; }
.srow span { color: #9a9a9a; }
strong { letter-spacing: .1px; font-size: 13px; }
.seg { display: flex; height: 31px; border: 1px solid #242424; border-radius: 4px; background: #505050; line-height: 28px; text-align: center; overflow: hidden; width: 312px; }
.seg span { width: 104px; border-right: 1px solid #242424; }
.seg span:last-child { border: 0; }
.seg .on { background: #6384a5; color: #fff; }
.ofs { display: block; margin: 7px 0 8px; color: #fff; }
.tbl { width: 311px; height: 341px; border: 1px solid #242424; border-radius: 3px 3px 0 0; background: #3b3b3b; overflow: hidden; }
.th { display: flex; height: 25px; background: #444; border-bottom: 1px solid #242424; line-height: 24px; padding-right: 18px; }
.th span:first-child { width: 60px; padding-left: 11px; }
.th span + span { flex: 1; border: 1px solid #242424; border-width: 0 1px; height: 16px; margin-top: 5px; line-height: 15px; padding-left: 8px; }
.tb { display: flex; }
.rows { width: 291px; }
.r { display: flex; align-items: center; height: 26.270px; border-bottom: 1px solid #353535; }
.r i { width: 20px; height: 20px; margin: 0 23px 0 17px; border: 1px solid #242424; border-radius: 4px; background: #505050; display: grid; place-items: center; }
.r i svg { width: 11px; height: 9px; }
.r span { border-left: 1px solid #353535; align-self: stretch; line-height: 26px; padding-left: 13px; }
.r.on { background: #6384a5; color: #fff; }
.r.on span { border-color: #242424; }
.sb { width: 18px; display: flex; flex-direction: column; align-items: center; padding-top: 8px; background: #414141; }
.sb i { width: 8px; height: 252px; border-radius: 4px; background: #808080; margin: 7px 0 30px; }
.sb.big { background: none; width: 8px; margin-left: 5px; padding-top: 15px; }
.sb.big i { height: 253px; margin: 7px 0 531px; }
.fld { display: flex; margin-top: 6px; height: 29px; }
.fld label { width: 121px; text-align: right; margin-right: 15px; line-height: 26px; white-space: nowrap; }
.fld > div { flex: 1; background: #2c2c2c; border: 1px solid #222; border-radius: 4px; height: 30px; padding: 0 7px 0 5px; display: flex; align-items: center; justify-content: space-between; color: #f2f2f2; margin-right: -1px; }
.f2 > div { padding-left: 7px; }
.nosel { height: 19px; line-height: 21px; padding-left: 4px; }

.status { display: flex; height: 27px; background: #404040; line-height: 30px; padding-left: 5px; white-space: nowrap; letter-spacing: .13px; }
.status span:nth-child(1) { width: 143px; }
.status span:nth-child(2) { width: 87px; }
.status span:nth-child(3) { width: 252px; }
.status span:nth-child(4) { width: 487px; }
.status span:nth-child(n+4) { border-left: 1px solid #2a2a2a; padding-left: 5px; margin-top: 4px; line-height: 22px; }
.status button { margin: 4px 0 0 auto; width: 50px; height: 23px; line-height: 18px; background: #505050; border-color: #222; padding: 0 0 3px; }

.cbar { position: absolute; left: 708px; top: 97px; width: 459px; height: 32px; background: #404040; border-radius: 5px; display: flex; padding-left: 4px; }
.cbar span { width: 32.140px; height: 32px; display: grid; place-items: center; position: relative; }
.cbar > i { width: 1px; height: 16px; margin: 8px -1px 0 0; background: #222; }
.cbar .c::after { content: ""; position: absolute; right: 0; bottom: 1px; border: solid transparent; border-width: 5px 0 0 5px; border-bottom: 5px solid #ddd; border-top: 0; }
.cbar text { fill: #c8c8c8; font-family: "Liberation Sans", sans-serif; letter-spacing: 0; }
.cbar .A { font: bold 19px/32px "Liberation Serif", serif; color: #5f9ee8; }

.menu { position: absolute; background: #424242; border: 1px solid #222; font-size: 15px; letter-spacing: 0; color: #eaeaea; box-shadow: 2px 2px 3px rgba(0, 0, 0, .35); }
.m1 { left: 1022px; top: 237px; width: 247px; height: 551px; padding-top: 2px; }
.m2 { left: 1267px; top: 474px; width: 330px; height: 498px; padding-top: 1.500px; }
.mi { height: 29px; line-height: 27px; padding-left: 39px; white-space: nowrap; position: relative; }
.menu hr { height: 1px; border: 0; background: #242424; margin: 2px 0 2px 39px; }
.mic { position: absolute; left: 7px; top: 5px; width: 16px; height: 16px; }
.m2 .mic { left: 8px; top: 7px; height: 12px; }
.s::after { content: ""; position: absolute; left: 229px; top: 9px; border: solid transparent; border-width: 5px 0 5px 5px; border-left-color: #eee; }
.hot { background: #6384a5; color: #fff; }
.off { color: #858585; }
.menu kbd { position: absolute; right: 34px; top: 0; font: inherit; font-size: 15px; line-height: 27px; letter-spacing: .5px; }
.mark { position: absolute; border: 15px solid #ed1c24; border-radius: 7px; }
.k1 { left: 1018px; top: 464px; width: 259px; height: 51px; }
.k2m { left: 1260px; top: 526px; width: 359px; height: 56px; }
```
